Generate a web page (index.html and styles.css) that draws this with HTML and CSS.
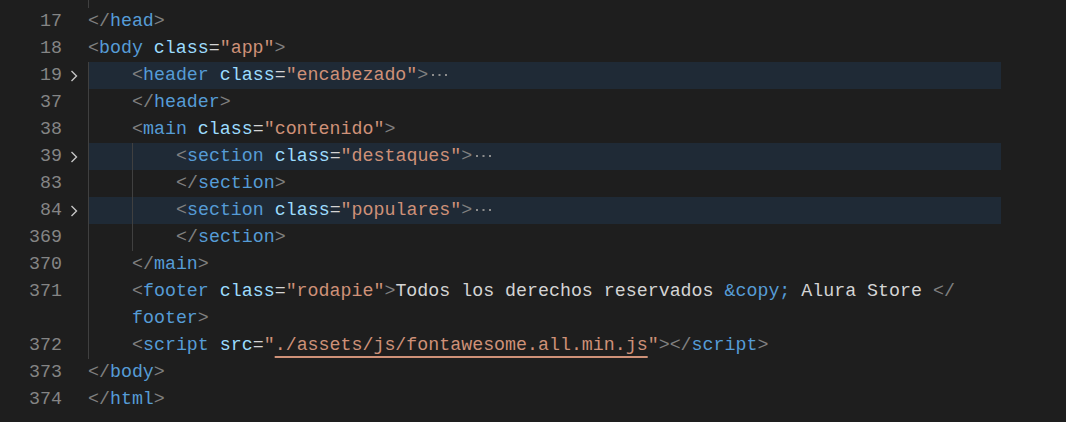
FILE: index.html
```html
<!DOCTYPE html>
<html lang="en">
<head>
    <meta charset="UTF-8">
    <title>index.html</title>
    <link rel="stylesheet" href="styles.css">
</head>
<body>
    <div class="editor">
        <div class="line"><span class="num">16</span><span class="fold"></span><div class="code"><span class="guide"></span></div></div>
        <div class="line"><span class="num">17</span><span class="fold"></span><div class="code"><span class="p">&lt;/</span><span class="t">head</span><span class="p">&gt;</span></div></div>
        <div class="line"><span class="num">18</span><span class="fold"></span><div class="code"><span class="p">&lt;</span><span class="t">body</span> <span class="a">class</span>=<span class="s">"app"</span><span class="p">&gt;</span></div></div>
        <div class="line folded"><span class="num">19</span><span class="fold"><svg width="8" height="12" viewBox="0 0 8 12"><polyline points="1.5,1 6.5,6 1.5,11" /></svg></span><div class="code"><span class="guide"></span><span class="p">&lt;</span><span class="t">header</span> <span class="a">class</span>=<span class="s">"encabezado"</span><span class="p">&gt;</span><svg class="dots" width="18" height="4" viewBox="0 0 18 4"><rect x="1" y="1" width="2" height="2" /><rect x="7.5" y="1" width="2" height="2" /><rect x="14" y="1" width="2" height="2" /></svg></div></div>
        <div class="line"><span class="num">37</span><span class="fold"></span><div class="code"><span class="guide"></span><span class="p">&lt;/</span><span class="t">header</span><span class="p">&gt;</span></div></div>
        <div class="line"><span class="num">38</span><span class="fold"></span><div class="code"><span class="guide"></span><span class="p">&lt;</span><span class="t">main</span> <span class="a">class</span>=<span class="s">"contenido"</span><span class="p">&gt;</span></div></div>
        <div class="line folded"><span class="num">39</span><span class="fold"><svg width="8" height="12" viewBox="0 0 8 12"><polyline points="1.5,1 6.5,6 1.5,11" /></svg></span><div class="code"><span class="guide"></span><span class="guide"></span><span class="p">&lt;</span><span class="t">section</span> <span class="a">class</span>=<span class="s">"destaques"</span><span class="p">&gt;</span><svg class="dots" width="18" height="4" viewBox="0 0 18 4"><rect x="1" y="1" width="2" height="2" /><rect x="7.5" y="1" width="2" height="2" /><rect x="14" y="1" width="2" height="2" /></svg></div></div>
        <div class="line"><span class="num">83</span><span class="fold"></span><div class="code"><span class="guide"></span><span class="guide"></span><span class="p">&lt;/</span><span class="t">section</span><span class="p">&gt;</span></div></div>
        <div class="line folded"><span class="num">84</span><span class="fold"><svg width="8" height="12" viewBox="0 0 8 12"><polyline points="1.5,1 6.5,6 1.5,11" /></svg></span><div class="code"><span class="guide"></span><span class="guide"></span><span class="p">&lt;</span><span class="t">section</span> <span class="a">class</span>=<span class="s">"populares"</span><span class="p">&gt;</span><svg class="dots" width="18" height="4" viewBox="0 0 18 4"><rect x="1" y="1" width="2" height="2" /><rect x="7.5" y="1" width="2" height="2" /><rect x="14" y="1" width="2" height="2" /></svg></div></div>
        <div class="line"><span class="num">369</span><span class="fold"></span><div class="code"><span class="guide"></span><span class="guide"></span><span class="p">&lt;/</span><span class="t">section</span><span class="p">&gt;</span></div></div>
        <div class="line"><span class="num">370</span><span class="fold"></span><div class="code"><span class="guide"></span><span class="p">&lt;/</span><span class="t">main</span><span class="p">&gt;</span></div></div>
        <div class="line"><span class="num">371</span><span class="fold"></span><div class="code"><span class="guide"></span><span class="p">&lt;</span><span class="t">footer</span> <span class="a">class</span>=<span class="s">"rodapie"</span><span class="p">&gt;</span>Todos los derechos reservados <span class="t">&amp;copy;</span> Alura Store <span class="p">&lt;/</span></div></div>
        <div class="line"><span class="num"></span><span class="fold"></span><div class="code"><span class="guide"></span><span class="t">footer</span><span class="p">&gt;</span></div></div>
        <div class="line"><span class="num">372</span><span class="fold"></span><div class="code"><span class="guide"></span><span class="p">&lt;</span><span class="t">script</span> <span class="a">src</span>=<span class="s">"<span class="link">./assets/js/fontawesome.all.min.js</span>"</span><span class="p">&gt;&lt;/</span><span class="t">script</span><span class="p">&gt;</span></div></div>
        <div class="line"><span class="num">373</span><span class="fold"></span><div class="code"><span class="p">&lt;/</span><span class="t">body</span><span class="p">&gt;</span></div></div>
        <div class="line"><span class="num">374</span><span class="fold"></span><div class="code"><span class="p">&lt;/</span><span class="t">html</span><span class="p">&gt;</span></div></div>
    </div>
</body>
</html>
```

FILE: styles.css
```css
body {
    margin: 0;
    background: #1e1e1e;
    overflow: hidden;
}

.editor {
    margin-top: -19px;
    font-family: "Liberation Mono", "DejaVu Sans Mono", monospace;
    font-size: 18.3px;
    color: #d4d4d4;
}

.line {
    display: flex;
    height: 27px;
    line-height: 27px;
}

.num {
    width: 62px;
    text-align: right;
    color: #858585;
    flex-shrink: 0;
}

.fold {
    width: 26px;
    flex-shrink: 0;
    display: flex;
    align-items: center;
    justify-content: center;
}

.fold svg {
    margin-left: -2px;
}

.fold polyline {
    fill: none;
    stroke: #c5c5c5;
    stroke-width: 1.4;
}

.code {
    width: 913px;
    height: 27px;
    white-space: pre;
    overflow: hidden;
}

.folded .code {
    background: #1f2a36;
}

.guide {
    display: inline-block;
    vertical-align: top;
    width: 44px;
    height: 27px;
    box-sizing: border-box;
    border-left: 1px solid #404040;
}

/* syntax colours */
.p {
    color: #808080;
}

.t {
    color: #569cd6;
}

.a {
    color: #9cdcfe;
}

.s {
    color: #ce9178;
}

.link {
    text-decoration: underline;
    text-decoration-thickness: 2px;
    text-underline-offset: 6px;
}

.dots {
    vertical-align: middle;
    margin-left: 3px;
    fill: #8c8c8c;
}
```
